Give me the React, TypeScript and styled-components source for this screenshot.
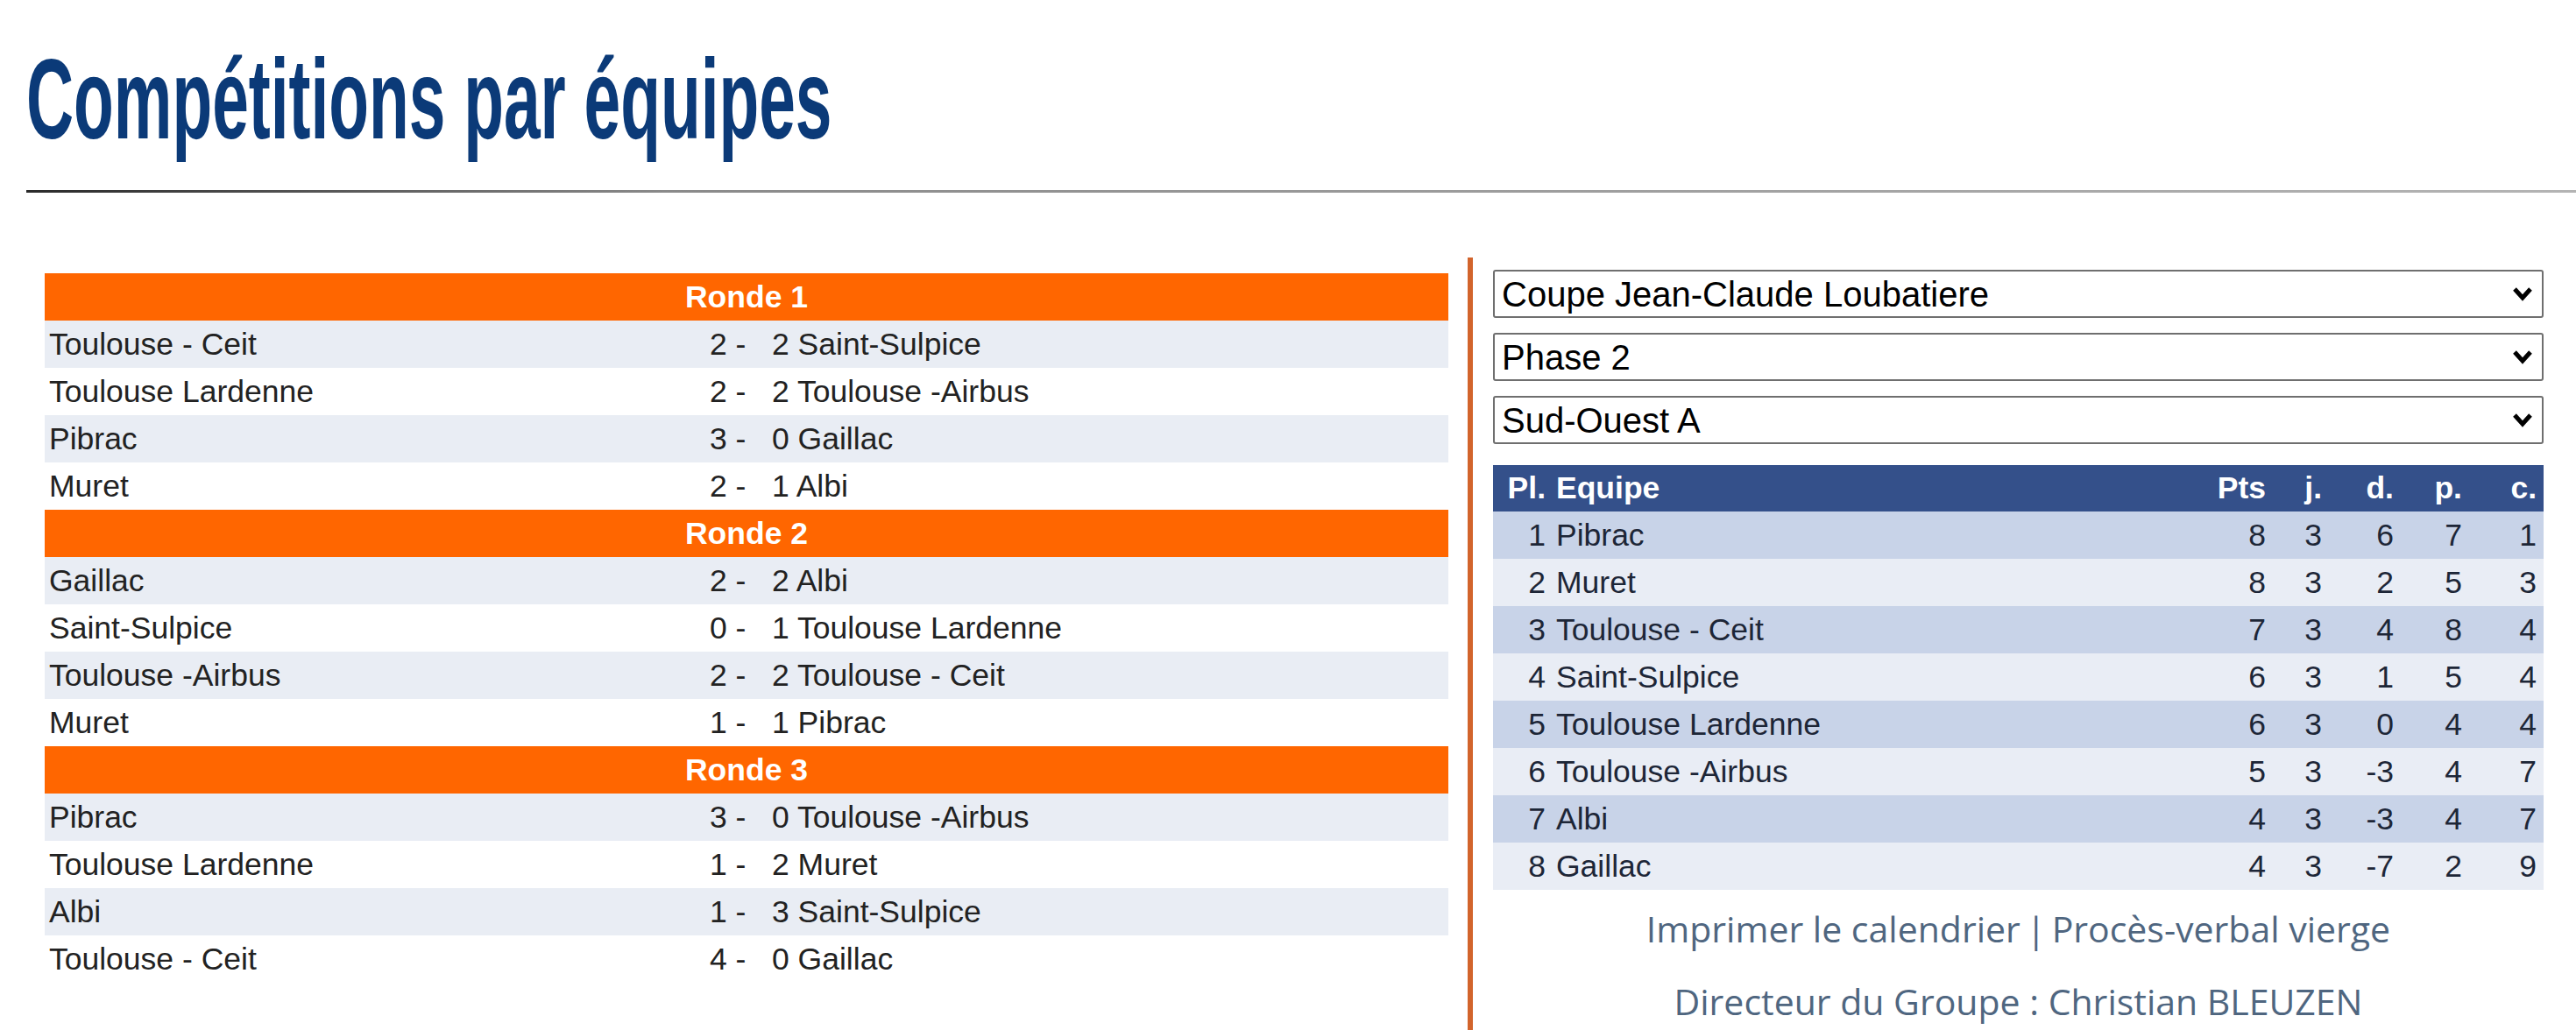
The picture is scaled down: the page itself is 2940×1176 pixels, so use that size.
import React from "react";
import styled, { createGlobalStyle } from "styled-components";

const GlobalStyle = createGlobalStyle`
  body {
    margin: 0;
    background: #fff;
    font-family: "Liberation Sans", Arial, sans-serif;
  }
`;

const Page = styled.div`
  padding-left: 30px;
  min-height: 1176px;
  overflow: hidden;
`;

const TitleWrap = styled.div`
  padding-top: 48px;
  height: 130px;
`;

const Title = styled.h1`
  display: inline-block;
  margin: 0;
  font-family: "Liberation Sans", Arial, sans-serif;
  font-size: 130px;
  line-height: 130px;
  font-weight: 700;
  color: #0b3a78;
  white-space: nowrap;
  transform: scaleX(0.576);
  transform-origin: left center;
`;

const Rule = styled.div`
  margin-top: 39px;
  height: 3px;
  background: linear-gradient(to right, #2a2a2a, #8a8a8a 25%, #b4b4b4);
`;

const Main = styled.div`
  display: flex;
  margin-top: 74px;
  padding-left: 21px;
  min-height: 882px;
`;

const LeftCol = styled.div`
  width: 1602px;
  padding-top: 18px;
`;

const Divider = styled.div`
  width: 6px;
  margin-left: 22px;
  background: #d2642c;
`;

const RightCol = styled.div`
  width: 1199px;
  margin-left: 23px;
  padding-top: 14px;
`;

const RoundHeader = styled.div`
  height: 54px;
  line-height: 54px;
  background: #ff6600;
  color: #fff;
  font-size: 35.5px;
  font-weight: 700;
  text-align: center;
`;

const MatchRow = styled.div<{ $alt: boolean }>`
  display: grid;
  grid-template-columns: 754px 1fr;
  height: 54px;
  line-height: 54px;
  background: ${(p) => (p.$alt ? "#e9edf4" : "#fff")};
  color: #222;
  font-size: 35.5px;
  white-space: pre;
`;

const MatchCell = styled.div`
  padding-left: 5px;
`;

const SelectWrap = styled.div`
  position: relative;
  height: 55px;
  margin-bottom: 17px;
`;

const Select = styled.select`
  appearance: none;
  -webkit-appearance: none;
  width: 100%;
  height: 55px;
  box-sizing: border-box;
  border: 2px solid #6f6f6f;
  border-radius: 3px;
  background: #fff;
  padding: 0 40px 0 8px;
  font-family: "Liberation Sans", Arial, sans-serif;
  font-size: 40px;
  color: #000;
  outline: none;
`;

const Chevron = styled.svg`
  position: absolute;
  right: 11px;
  top: 17px;
  width: 26px;
  height: 20px;
  pointer-events: none;
`;

const StandRow = styled.div<{ $kind: "head" | "odd" | "even" }>`
  display: grid;
  grid-template-columns: 66px 1fr 100px 64px 82px 78px 85px;
  height: ${(p) => (p.$kind === "head" ? 53 : 54)}px;
  line-height: ${(p) => (p.$kind === "head" ? 53 : 54)}px;
  background: ${(p) =>
    p.$kind === "head" ? "#34508a" : p.$kind === "odd" ? "#c8d3e8" : "#e9edf5"};
  color: ${(p) => (p.$kind === "head" ? "#fff" : "#1d2637")};
  font-weight: ${(p) => (p.$kind === "head" ? 700 : 400)};
  font-size: 35.5px;
  white-space: nowrap;
`;

const Cell = styled.div<{ $align?: "left" | "right" }>`
  text-align: ${(p) => p.$align || "right"};
  padding: ${(p) => (p.$align === "left" ? "0 0 0 6px" : "0 8px 0 0")};
`;

const PlaceCell = styled.div`
  text-align: right;
  padding-right: 6px;
`;

const Footer = styled.div`
  font-family: "Open Sans", "Noto Sans", sans-serif;
  font-size: 41px;
  line-height: 83px;
  color: #4f6680;
  text-align: center;
  margin-top: 3px;
`;

const FooterLink = styled.span`
  cursor: pointer;
`;

const Sep = styled.span`
  margin: 0 -4px;
`;

const rounds = [
  {
    name: "Ronde 1",
    matches: [
      ["Toulouse - Ceit", 2, 2, "Saint-Sulpice"],
      ["Toulouse Lardenne", 2, 2, "Toulouse -Airbus"],
      ["Pibrac", 3, 0, "Gaillac"],
      ["Muret", 2, 1, "Albi"],
    ],
  },
  {
    name: "Ronde 2",
    matches: [
      ["Gaillac", 2, 2, "Albi"],
      ["Saint-Sulpice", 0, 1, "Toulouse Lardenne"],
      ["Toulouse -Airbus", 2, 2, "Toulouse - Ceit"],
      ["Muret", 1, 1, "Pibrac"],
    ],
  },
  {
    name: "Ronde 3",
    matches: [
      ["Pibrac", 3, 0, "Toulouse -Airbus"],
      ["Toulouse Lardenne", 1, 2, "Muret"],
      ["Albi", 1, 3, "Saint-Sulpice"],
      ["Toulouse - Ceit", 4, 0, "Gaillac"],
    ],
  },
];

const standings = [
  [1, "Pibrac", 8, 3, 6, 7, 1],
  [2, "Muret", 8, 3, 2, 5, 3],
  [3, "Toulouse - Ceit", 7, 3, 4, 8, 4],
  [4, "Saint-Sulpice", 6, 3, 1, 5, 4],
  [5, "Toulouse Lardenne", 6, 3, 0, 4, 4],
  [6, "Toulouse -Airbus", 5, 3, -3, 4, 7],
  [7, "Albi", 4, 3, -3, 4, 7],
  [8, "Gaillac", 4, 3, -7, 2, 9],
];

const selects = ["Coupe Jean-Claude Loubatiere", "Phase 2", "Sud-Ouest A"];

const App = () => {
  return (
    <Page>
      <GlobalStyle />
      <TitleWrap>
        <Title>Compétitions par équipes</Title>
      </TitleWrap>
      <Rule />
      <Main>
        <LeftCol>
          {rounds.map((r) => (
            <div key={r.name}>
              <RoundHeader>{r.name}</RoundHeader>
              {r.matches.map((m, i) => (
                <MatchRow key={i} $alt={i % 2 === 0}>
                  <MatchCell>{m[0]}</MatchCell>
                  <MatchCell>{`${m[1]} -   ${m[2]} ${m[3]}`}</MatchCell>
                </MatchRow>
              ))}
            </div>
          ))}
        </LeftCol>
        <Divider />
        <RightCol>
          {selects.map((s) => (
            <SelectWrap key={s}>
              <Select defaultValue={s}>
                <option value={s}>{s}</option>
              </Select>
              <Chevron viewBox="0 0 26 20">
                <path d="M4 5 L13 15 L22 5" fill="none" stroke="#000" strokeWidth="5" />
              </Chevron>
            </SelectWrap>
          ))}
          <div style={{ height: 7 }} />
          <StandRow $kind="head">
            <PlaceCell>Pl.</PlaceCell>
            <Cell $align="left">Equipe</Cell>
            <Cell>Pts</Cell>
            <Cell>j.</Cell>
            <Cell>d.</Cell>
            <Cell>p.</Cell>
            <Cell>c.</Cell>
          </StandRow>
          {standings.map((row, i) => (
            <StandRow key={i} $kind={i % 2 === 0 ? "odd" : "even"}>
              <PlaceCell>{row[0]}</PlaceCell>
              <Cell $align="left">{row[1]}</Cell>
              <Cell>{row[2]}</Cell>
              <Cell>{row[3]}</Cell>
              <Cell>{row[4]}</Cell>
              <Cell>{row[5]}</Cell>
              <Cell>{row[6]}</Cell>
            </StandRow>
          ))}
          <Footer>
            <div>
              <FooterLink>Imprimer le calendrier</FooterLink> <Sep>|</Sep>{" "}
              <FooterLink>Procès-verbal vierge</FooterLink>
            </div>
            <div>Directeur du Groupe : Christian BLEUZEN</div>
          </Footer>
        </RightCol>
      </Main>
    </Page>
  );
};

export default App;
